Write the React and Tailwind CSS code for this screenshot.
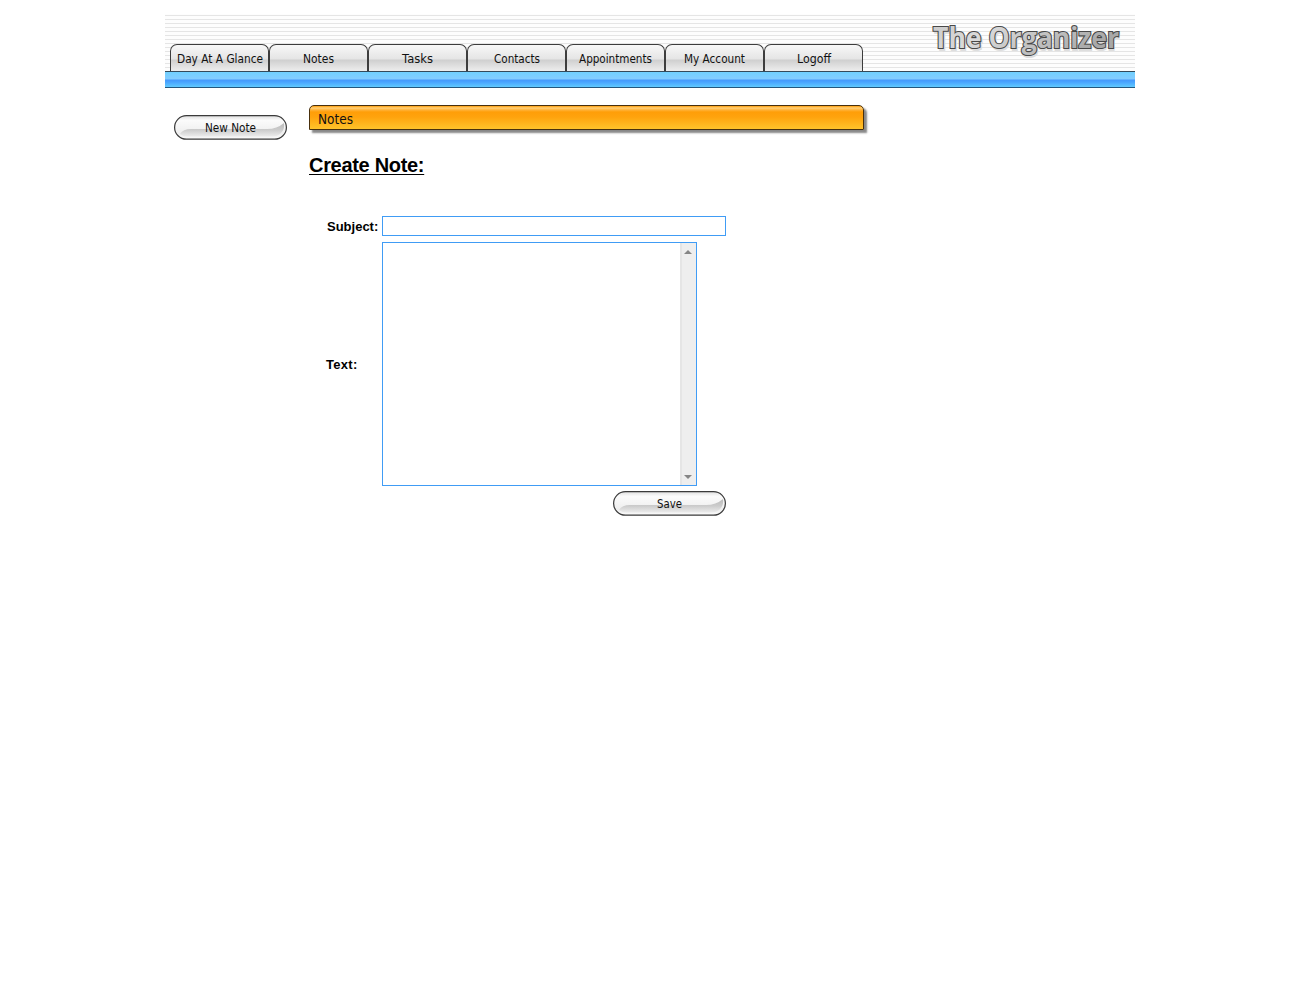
const TABS = [
  ["Day At A Glance", 86],
  ["Notes", 31],
  ["Tasks", 31],
  ["Contacts", 46],
  ["Appointments", 73],
  ["My Account", 61],
  ["Logoff", 34],
];

function Label({ text, width, size = 12 }) {
  return (
    <svg width={width} height="18" className="block shrink-0 overflow-visible" aria-label={text}>
      <text
        x="0"
        y="13"
        textLength={width}
        lengthAdjust="spacingAndGlyphs"
        fontSize={size}
        fill="#111"
        className="font-['DejaVu_Sans',sans-serif] font-normal"
      >
        {text}
      </text>
    </svg>
  );
}

function Tab({ text, width }) {
  return (
    <a className="flex h-[27px] w-[99px] justify-center rounded-t-[7px] border-x border-t-[1.5px] border-[#3d3d3d] bg-[linear-gradient(#f8f8f8_0px,#eeeeee_7px,#e5e5e5_14px,#cfcfcf_15px,#dddddd_20px,#ededed_26px)] pt-[5px]">
      <Label text={text} width={width} size={12} />
    </a>
  );
}

function PillButton({ text, width }) {
  return (
    <button type="button" className="relative block h-[25px] w-[113px]">
      <svg width="113" height="25" className="block" aria-hidden="true">
        <defs>
          <linearGradient id="pill" x1="0" y1="0" x2="0" y2="1">
            <stop offset="0" stopColor="#dedede" />
            <stop offset="0.2" stopColor="#fbfbfb" />
            <stop offset="0.75" stopColor="#eeeeee" />
            <stop offset="1" stopColor="#fafafa" />
          </linearGradient>
          <linearGradient id="shade" x1="0" y1="0" x2="0" y2="1">
            <stop offset="0" stopColor="#bcbcbc" />
            <stop offset="0.5" stopColor="#cbcbcb" />
            <stop offset="1" stopColor="#ececec" />
          </linearGradient>
        </defs>
        <rect x="0.6" y="0.6" width="111.8" height="23.6" rx="11.8" fill="url(#pill)" stroke="#3a3a3a" strokeWidth="1.2" />
        <path d="M6 19 Q9 14 17 14 H93 Q103 14 110 8 Q111 15 106 19 Q103 21.5 98 21.5 H14 Q9 21.5 6 19Z" fill="url(#shade)" />
      </svg>
      <span className="absolute inset-0 flex justify-center pt-[4px]">
        <Label text={text} width={width} size={12} />
      </span>
    </button>
  );
}

function Logo() {
  return (
    <svg width="194" height="40" className="block overflow-visible" aria-label="The Organizer">
      <defs>
        <linearGradient id="metal" x1="0" y1="0" x2="1" y2="0.3">
          <stop offset="0" stopColor="#c8c8c8" />
          <stop offset="0.35" stopColor="#dadada" />
          <stop offset="0.7" stopColor="#c0c0c0" />
          <stop offset="1" stopColor="#a8a8a8" />
        </linearGradient>
      </defs>
      <g fontSize="28" fontWeight="700" strokeLinejoin="miter" className="font-['Open_Sans','Noto_Sans',sans-serif]">
        <text x="2.5" y="27.5" textLength="185" lengthAdjust="spacingAndGlyphs" fill="#d4d4d4" stroke="#dedede" strokeWidth="2" aria-hidden="true">
          The Organizer
        </text>
        <text x="1" y="26" textLength="186" lengthAdjust="spacingAndGlyphs" fill="url(#metal)" stroke="#484848" strokeWidth="2.2" paintOrder="stroke">
          The Organizer
        </text>
      </g>
    </svg>
  );
}

function ScrollTrack() {
  return (
    <div className="flex w-[16px] flex-col items-center justify-between border-l-2 border-[#e5e5e5] bg-[#eeeeee] pt-[7px] pr-[2px] pb-[6px]">
      <svg width="8" height="4" aria-hidden="true"><path d="M4 0L8 4H0Z" fill="#858585" /></svg>
      <svg width="8" height="4" aria-hidden="true"><path d="M0 0H8L4 4Z" fill="#858585" /></svg>
    </div>
  );
}

export default function App() {
  return (
    <div className="min-h-[1004px] bg-white pt-[14px] text-black">
      <div className="ml-[165px] w-[970px]">
        <header>
          <div className="flex h-[57px] items-end justify-between bg-[repeating-linear-gradient(#fdfdfd_0px,#fdfdfd_1px,#e5e5e5_1px,#e5e5e5_2px,#fdfdfd_2px,#fdfdfd_4px)] pl-[5px] pr-[9px]">
            <nav className="flex h-[27px]">
              {TABS.map(([text, width]) => (
                <Tab key={text} text={text} width={width} />
              ))}
            </nav>
            <div className="h-[49px]">
              <Logo />
            </div>
          </div>
          <div className="h-[17px] border-y border-t-[#34495a] border-b-[#24577f] bg-[linear-gradient(#70d0ff_0px,#84ccff_7px,#4599fa_8px,#49a4ff_10px,#60caff_15px)]" />
        </header>
        <div className="flex">
          <aside className="w-[144px] pt-[27px] pl-[9px]">
            <PillButton text="New Note" width={51} />
          </aside>
          <main className="pt-[17px]">
            <div className="h-[25px] w-[555px] rounded-t-[5px] border border-[#49300d] bg-[linear-gradient(#ff9d08_0px,#ffd17b_2px,#ffb136_4px,#ff9e08_6px,#ffa30d_11px,#ffc62d_24px)] pt-[5px] pl-[8px] shadow-[3px_3px_2px_#888]">
              <Label text="Notes" width={35} size={13.5} />
            </div>
            <h1 className="mt-[22px] h-[25px] w-[115px] whitespace-nowrap font-['Liberation_Sans',Arial,sans-serif] text-[20px] leading-[26px] font-bold tracking-[-0.31px] underline decoration-1 underline-offset-2">
              Create Note:
            </h1>
            <form className="mt-[39px] ml-[17px] w-[400px] font-['Liberation_Sans',Arial,sans-serif] text-[13px] font-bold">
              <div className="flex h-[20px] items-center">
                <label htmlFor="subject" className="w-[56px] pt-px pl-px">Subject:</label>
                <input id="subject" className="h-[20px] w-[344px] border border-[#409cf5] bg-white px-1 outline-none" />
              </div>
              <div className="mt-[6px] flex items-center">
                <label htmlFor="note" className="w-[56px] pt-[2px] tracking-[0.3px]">Text:</label>
                <div className="flex h-[244px] w-[315px] border border-[#409cf5]">
                  <textarea id="note" className="min-w-0 flex-1 resize-none overflow-hidden outline-none" />
                  <ScrollTrack />
                </div>
              </div>
              <div className="mt-[5px] flex justify-end">
                <PillButton text="Save" width={25} />
              </div>
            </form>
          </main>
        </div>
      </div>
    </div>
  );
}
